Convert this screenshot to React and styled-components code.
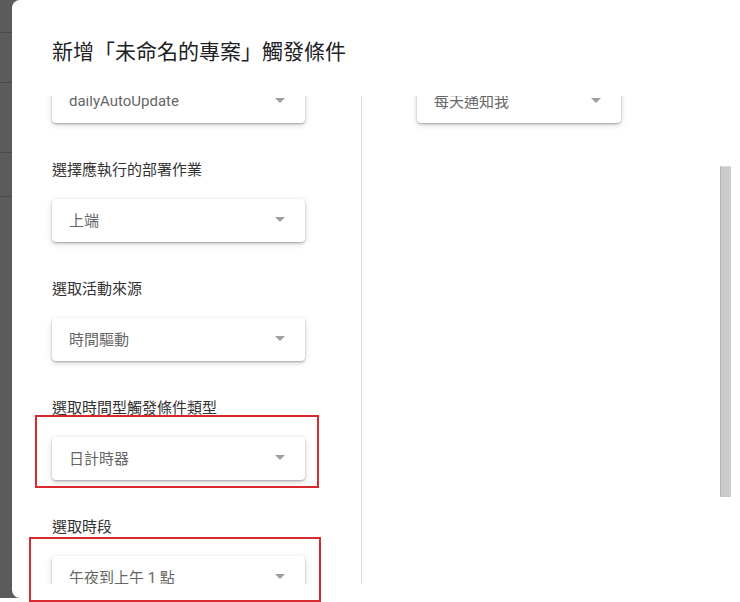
import React, { useLayoutEffect, useRef } from "react";
import styled, { createGlobalStyle } from "styled-components";

const GlobalStyle = createGlobalStyle`
    html, body {
        margin: 0;
        padding: 0;
        background: #fff;
    }
    body {
        width: 740px;
        height: 602px;
        overflow: hidden;
        font-family: Roboto, "Noto Sans CJK TC", sans-serif;
    }
`;

const Page = styled.div`
    position: relative;
    width: 740px;
    height: 602px;
    overflow: hidden;
    background: #fff;
`;

// dimmed page behind the dialog, with the faint row lines of the editor
const Screen = styled.div`
    display: flex;
    height: 598px;
    padding-left: 12px;
    box-sizing: border-box;
    background:
        linear-gradient(#4b4b4b, #4b4b4b) 0 32px / 100% 1px no-repeat,
        linear-gradient(#4b4b4b, #4b4b4b) 0 82px / 100% 1px no-repeat,
        linear-gradient(#4b4b4b, #4b4b4b) 0 152px / 100% 1px no-repeat,
        linear-gradient(#4b4b4b, #4b4b4b) 0 196px / 100% 1px no-repeat,
        #5b5b5b;
`;

const Dialog = styled.div`
    position: relative;
    flex: 1;
    display: flex;
    flex-direction: column;
    padding-right: 20px;
    background: #fff;
    border-radius: 8px 0 0 8px;
`;

const Title = styled.h2`
    margin: 0;
    height: 96px;
    box-sizing: border-box;
    padding: 40px 0 0 40px;
    font-size: 21px;
    line-height: 24px;
    font-weight: 400;
    color: #202124;
    white-space: nowrap;
`;

const Body = styled.div`
    height: 488px;
    overflow-y: auto;
    padding-left: 40px;
    scrollbar-width: none;

    &::-webkit-scrollbar {
        display: none;
    }
`;

// scrollbar thumb, sits over the right edge of the dialog
const Thumb = styled.div`
    position: absolute;
    top: 166px;
    left: 708px;
    width: 11px;
    height: 331px;
    box-sizing: border-box;
    background: #cbcbcb;
    border-left: 1px solid #b4b4b4;
    border-top: 1px solid #e0e0e0;
`;

const Columns = styled.div`
    display: grid;
    grid-template-columns: 310px 1fr;
    min-height: 720px;
`;

const Column = styled.div`
    padding-top: 48px;
    padding-left: ${(p) => (p.$right ? "55px" : "0")};
    border-right: ${(p) => (p.$right ? "none" : "1px solid #dadce0")};
`;

const Field = styled.div`
    margin-bottom: 37px;
`;

const Label = styled.div`
    font-size: 15px;
    line-height: 20px;
    color: #333;
    margin-bottom: 19px;
`;

const Select = styled.div`
    display: flex;
    align-items: center;
    justify-content: space-between;
    width: ${(p) => p.$width}px;
    height: 43px;
    box-sizing: border-box;
    padding: 0 20px 2px 17px;
    border-radius: 4px;
    background: #fff;
    font-size: 15px;
    color: #666;
    box-shadow: 0 1px 2px rgba(0, 0, 0, 0.28), 0 2px 6px rgba(0, 0, 0, 0.16);
`;

const Caret = styled.span`
    width: 0;
    height: 0;
    border-left: 5.5px solid transparent;
    border-right: 5.5px solid transparent;
    border-top: 5px solid #9e9e9e;
`;

// red annotation frames drawn over the screenshot
const Mark = styled.div`
    position: absolute;
    top: ${(p) => p.$top}px;
    left: ${(p) => p.$left}px;
    width: ${(p) => p.$w}px;
    height: ${(p) => p.$h}px;
    box-sizing: border-box;
    border: 2px solid #d8292f;
    pointer-events: none;
`;

const leftFields = [
    { label: "選擇要執行的功能", value: "dailyAutoUpdate" },
    { label: "選擇應執行的部署作業", value: "上端" },
    { label: "選取活動來源", value: "時間驅動" },
    { label: "選取時間型觸發條件類型", value: "日計時器" },
    { label: "選取時段", value: "午夜到上午 1 點" },
];

const Dropdown = ({ label, value, width }) => (
    <Field>
        <Label>{label}</Label>
        <Select $width={width}>
            <span>{value}</span>
            <Caret />
        </Select>
    </Field>
);

const App = () => {
    const bodyRef = useRef(null);

    useLayoutEffect(() => {
        if (bodyRef.current) {
            bodyRef.current.scrollTop = 103;
        }
    }, []);

    return (
        <Page>
            <GlobalStyle />
            <Screen>
                <Dialog>
                    <Title>新增「未命名的專案」觸發條件</Title>
                    <Body ref={bodyRef}>
                        <Columns>
                            <Column>
                                {leftFields.map((f) => (
                                    <Dropdown key={f.label} label={f.label} value={f.value} width={253} />
                                ))}
                            </Column>
                            <Column $right>
                                <Dropdown label="失敗通知設定" value="每天通知我" width={204} />
                            </Column>
                        </Columns>
                    </Body>
                    <Thumb />
                </Dialog>
            </Screen>
            <Mark $top={415} $left={35} $w={284} $h={73} />
            <Mark $top={537} $left={29} $w={292} $h={65} />
        </Page>
    );
};

export default App;
